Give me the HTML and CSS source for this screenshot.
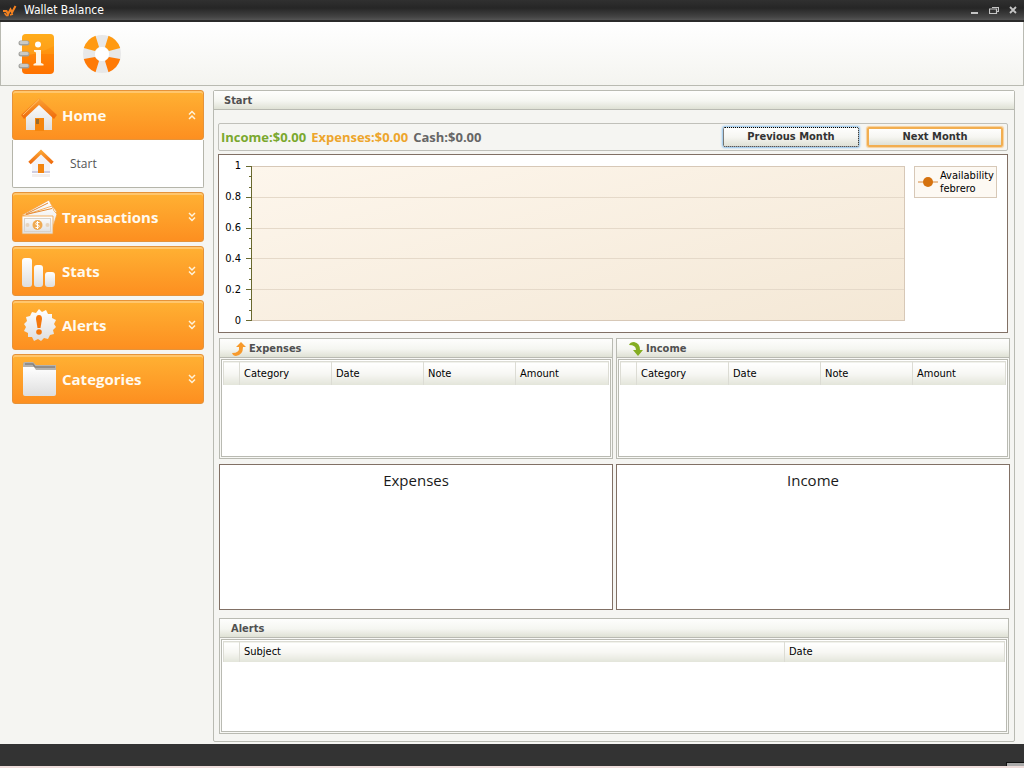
FILE: index.html
```html
<!DOCTYPE html>
<html lang="en">
<head>
<meta charset="utf-8">
<title>Wallet Balance</title>
<link rel="stylesheet" href="styles.css">
</head>
<body>
<svg class="defs" aria-hidden="true">
  <defs>
    <linearGradient id="amber" x1="0" y1="0" x2="0" y2="1"><stop offset="0" stop-color="#ffa914"/><stop offset=".5" stop-color="#ff920f"/><stop offset=".51" stop-color="#ff8508"/><stop offset="1" stop-color="#ff7200"/></linearGradient>
    <linearGradient id="pale" x1="0" y1="0" x2="0" y2="1"><stop offset="0" stop-color="#ffffff"/><stop offset="1" stop-color="#dedede"/></linearGradient>
    <linearGradient id="roof" x1="0" y1="0" x2="0" y2="1"><stop offset="0" stop-color="#fba233"/><stop offset="1" stop-color="#ef6a0c"/></linearGradient>
    <symbol id="down" viewBox="0 0 8 10"><path d="M1 1l3 3 3-3M1 5.500l3 3 3-3" fill="none" stroke="#fff3da" stroke-width="1.500"/></symbol>
  </defs>
</svg>
<header class="titlebar">
  <svg width="16" height="14" viewBox="0 0 16 14"><path d="M2 8h3.500l1.500 3L9.500 6.500l1.500 3L14.500 3" fill="none" stroke="#f58220" stroke-width="2"/><path d="M3.500 10l2 2.500h2M9 12l3-1" fill="none" stroke="#f58220" stroke-width="1.500"/></svg>
  <h1 class="app-name">Wallet Balance</h1>
  <button class="win" aria-label="Minimize"><svg width="10" height="10"><path d="M1 8h7" stroke="#c4c4c4" stroke-width="2"/></svg></button>
  <button class="win" aria-label="Restore"><svg width="10" height="10"><path d="M3 2.500h6.500v4H8M.5 4h7v4.500h-7z" fill="none" stroke="#c4c4c4" stroke-width="1.200"/></svg></button>
  <button class="win" aria-label="Close"><svg width="10" height="10"><path d="M2 2l6 6M8 2L2 8" stroke="#c4c4c4" stroke-width="1.800"/></svg></button>
</header>
<div class="toolbar">
  <button class="tool" aria-label="Information"><svg width="40" height="42" viewBox="0 0 40 42"><rect x="5" y="1" width="32" height="40" rx="4" fill="url(#amber)"/><path d="M5 23Q20 22 37 13V5q0-4-4-4H9Q5 1 5 5z" fill="#ffb52e" opacity=".3"/><g stroke="#a0a09c" stroke-width="5" stroke-linecap="round"><path d="M4 10h6M4 21h6M4 33h6"/></g><g stroke="#cacac6" stroke-width="3" stroke-linecap="round"><path d="M4 9.500h6M4 20.500h6M4 32.500h6"/></g><circle cx="21" cy="11.500" r="3" fill="#fff"/><path d="M17 17h7v13l2.500 1v1.500h-10V31l2.500-1V19.500l-2-1z" fill="#fff5e5"/></svg></button>
  <button class="tool" aria-label="Help"><svg width="42" height="42" viewBox="0 0 42 42"><circle cx="21" cy="21" r="13" fill="none" stroke="#e8e8e8" stroke-width="12"/><circle cx="21" cy="21" r="7" fill="#fff"/><g fill="#ff9a12"><path d="M14.500 2.800A19.500 19.500 0 0 0 2.800 15l11.200 3q1.500-2.500 4-4z"/><path d="M27.500 2.800A19.500 19.500 0 0 1 39.200 15l-11.200 3q-1.500-2.500-4-4z"/></g><g fill="#ff7a06"><path d="M14.500 39.200A19.500 19.500 0 0 1 2.800 26l11.200-2q1.500 2.500 4 4z"/><path d="M27.500 39.200A19.500 19.500 0 0 0 39.200 26l-11.200-2q-1.500 2.500-4 4z"/></g></svg></button>
</div>
<div class="workspace">
  <nav class="sidebar">
    <div class="section">
      <button class="nav-head"><svg width="36" height="36" viewBox="0 0 36 36"><path d="M5 16L18 4l13 12v17H5z" fill="url(#pale)"/><path d="M18 1L36 18l-3 4L18 8 3 22l-3-4z" fill="url(#roof)"/><path d="M18 2.500L2 18" stroke="#ffc16b" stroke-width="1" fill="none"/><rect x="14" y="21" width="9" height="13" fill="#f5850c"/><rect x="15" y="22" width="3" height="5" fill="#9a6a2a"/></svg><span class="nav-label">Home</span><svg class="flip" width="8" height="10"><use href="#down"/></svg></button>
      <a class="nav-item" href="#start"><svg width="26" height="30" viewBox="0 0 26 30"><path d="M4 13l9-8 9 8v10H4z" fill="#f4f3f6"/><path d="M4 22h18v2H4z" fill="#cfcde0"/><path d="M4 25h18v3H4z" fill="#f3efed"/><path d="M1.500 14L13 3l11.500 11" stroke="url(#roof)" stroke-width="3.500" fill="none"/><rect x="10" y="15" width="6" height="9" fill="#f3850f"/></svg>Start</a>
    </div>
    <button class="nav-head"><svg width="36" height="36" viewBox="0 0 36 36"><g fill="url(#pale)" stroke="#f6a13c" stroke-width=".8"><path d="M1 16L28 1q2 5 5 8l3 4L9 33z"/><path d="M1 17L31 7q1 5 5 8l-4 13-26 5z"/><path d="M1 17h31v18H1z"/></g><path d="M5 15L27 4M5 15.500l26-6" stroke="#e68a33" stroke-width="1"/><rect x="3.500" y="19.500" width="26" height="13" fill="none" stroke="#d9d2c9"/><circle cx="16.500" cy="26" r="5" fill="#efaa52"/><path d="M18.500 23.500h-3q-1.500 1.200 0 2.500h2q1.500 1.300 0 2.500h-3M16.500 22v8" fill="none" stroke="#fff"/><circle cx="6.500" cy="26" r="2" fill="#e7d4bd"/><circle cx="26.500" cy="26" r="2" fill="#e7d4bd"/></svg><span class="nav-label">Transactions</span><svg width="8" height="10"><use href="#down"/></svg></button>
    <button class="nav-head"><svg width="36" height="36" viewBox="0 0 36 36"><g fill="url(#pale)"><rect x="1" y="5" width="10" height="29" rx="3"/><rect x="13" y="12" width="9" height="22" rx="3"/><rect x="24" y="19" width="10" height="15" rx="3"/></g></svg><span class="nav-label">Stats</span><svg width="8" height="10"><use href="#down"/></svg></button>
    <button class="nav-head"><svg width="36" height="36" viewBox="0 0 36 36"><path d="M18 2l3 3 4-2 2 4h4l0 4 4 2-2 4 2 3-3 3 1 4-4 1-2 4-4-1-3 3-3-2-4 2-2-4-4 0 0-4-4-2 2-4-2-3 3-3-1-4 4-1 2-4 4 1z" fill="url(#pale)"/><path d="M15 12q0-4 3-4t3 4l-1.500 9h-3z" fill="#f5780c"/><circle cx="18" cy="25" r="2.800" fill="#f5780c"/></svg><span class="nav-label">Alerts</span><svg width="8" height="10"><use href="#down"/></svg></button>
    <button class="nav-head"><svg width="36" height="36" viewBox="0 0 36 36"><path d="M2 3q0-2 2-2h8l3 3h20v10H2z" fill="#b5b2ad"/><path d="M4 3h8l2 3h20" fill="none" stroke="#85827f" stroke-width="1.500"/><path d="M2 6h11l2 3h20v24q0 2-2 2H4q-2 0-2-2z" fill="url(#pale)"/></svg><span class="nav-label">Categories</span><svg width="8" height="10"><use href="#down"/></svg></button>
  </nav>
  <main class="page" id="start">
    <h2 class="bar">Start</h2>
    <div class="content">
      <div class="summary">
        <span class="income">Income:$0.00</span><span class="expense">Expenses:$0.00</span><span class="cash">Cash:$0.00</span>
        <button class="month focused">Previous Month</button>
        <button class="month next">Next Month</button>
      </div>
      <div class="chart">
        <div class="scale"><span>1</span><span>0.8</span><span>0.6</span><span>0.4</span><span>0.2</span><span>0</span></div>
        <svg class="ticks" viewBox="0 0 6 155" preserveAspectRatio="none"><path d="M5.500 0v155M0 .5h6M0 31.500h6M0 62.500h6M0 92.500h6M0 123.500h6M0 154.500h6M3 10.500h3M3 21.500h3M3 41.500h3M3 52.500h3M3 72.500h3M3 82.500h3M3 102.500h3M3 113.500h3M3 133.500h3M3 144.500h3" fill="none" stroke="#69692f"/></svg>
        <div class="plot"><i></i><i></i><i></i><i></i><i></i></div>
        <div class="legend"><svg width="20" height="12"><path d="M0 6h20" stroke="#d9883b"/><circle cx="10" cy="6" r="5" fill="#d5720f"/></svg><span>Availability<br>febrero</span></div>
      </div>
      <div class="pair">
        <section class="group">
          <h3 class="bar"><svg width="16" height="14" viewBox="0 0 16 14"><path d="M1 11q8 0 7-6H5l5-5 5 5h-3q0 8-7 9-3 0-4-3z" fill="#f79a2c"/></svg>Expenses</h3>
          <div class="grid"><table><colgroup><col class="mark"><col class="field"><col class="field"><col class="field"><col></colgroup><thead><tr><th></th><th>Category</th><th>Date</th><th>Note</th><th>Amount</th></tr></thead></table></div>
        </section>
        <section class="group">
          <h3 class="bar"><svg width="16" height="14" viewBox="0 0 16 14"><path d="M1 3q1-3 5-3 6 1 6 8h3l-5 6-5-6h3q0-5-7-5z" fill="#84ad22"/></svg>Income</h3>
          <div class="grid"><table><colgroup><col class="mark"><col class="field"><col class="field"><col class="field"><col></colgroup><thead><tr><th></th><th>Category</th><th>Date</th><th>Note</th><th>Amount</th></tr></thead></table></div>
        </section>
      </div>
      <div class="pair pies">
        <section class="pie">Expenses</section>
        <section class="pie">Income</section>
      </div>
      <section class="group alerts">
        <h3 class="bar">Alerts</h3>
        <div class="grid"><table><colgroup><col class="mark"><col><col class="when"></colgroup><thead><tr><th></th><th>Subject</th><th>Date</th></tr></thead></table></div>
      </section>
    </div>
  </main>
</div>
<footer class="statusbar"><span class="grip"></span></footer>
</body>
</html>
```
FILE: styles.css
```css
* { box-sizing: border-box; }
body {
  margin: 0;
  min-height: 100vh;
  display: flex;
  flex-direction: column;
  background: #f5f5f2;
  color: #000;
  font: 11px/14px "DejaVu Sans Condensed", "DejaVu Sans", sans-serif;
}
h1, h2, h3 { margin: 0; }
button { border: 0; padding: 0; background: none; font: inherit; }
svg { flex: none; }
.defs { position: absolute; width: 0; height: 0; }

.titlebar {
  display: flex;
  align-items: center;
  gap: 9px;
  height: 22px;
  padding: 0 6px 0 1px;
  background: linear-gradient(#303030, #262626 40%, #444 85%, #555);
  border-bottom: 2px solid #2a2a2a;
}
.app-name {
  flex: 1;
  margin-left: -2px;
  color: #fff;
  font: 12px/16px "DejaVu Sans Condensed", "DejaVu Sans", sans-serif;
}
.win { display: flex; }

.toolbar {
  display: flex;
  align-items: center;
  gap: 24px;
  height: 64px;
  padding-left: 16px;
  background: linear-gradient(#fff, #f4f4f0);
  border: 1px solid #b9bab2;
  border-top: 0;
}
.tool { display: flex; }

.workspace {
  flex: 1;
  display: flex;
  gap: 9px;
  padding: 4px 9px 2px 12px;
}
.sidebar {
  display: flex;
  flex-direction: column;
  gap: 4px;
  width: 192px;
}
.nav-head {
  display: flex;
  align-items: center;
  gap: 5px;
  width: 100%;
  height: 50px;
  padding: 0 7px 0 8px;
  border: 1px solid #e5933a;
  border-radius: 3px;
  background: linear-gradient(#ffb133, #fd8f20);
  box-shadow: inset 0 2px 0 #ffc66d;
}
.nav-label {
  flex: 1;
  color: #fffaf0;
  text-align: left;
  font: bold 15px/20px "Open Sans", sans-serif;
}
.flip { transform: scaleY(-1); }
.nav-item {
  display: flex;
  align-items: center;
  gap: 16px;
  height: 48px;
  padding-left: 15px;
  border: 1px solid #b5b5aa;
  border-top: 0;
  border-radius: 0 0 2px 2px;
  background: #fff;
  color: #555;
  font: 12px/14px "Open Sans", sans-serif;
  text-decoration: none;
}

.page {
  flex: 1;
  min-width: 0;
  display: flex;
  flex-direction: column;
  border: 1px solid #b9bab2;
  border-radius: 2px;
}
.bar {
  display: flex;
  align-items: center;
  gap: 2px;
  height: 19px;
  padding: 1px 0 0 11px;
  border-bottom: 1px solid #b9bab2;
  background: linear-gradient(#fefefd, #f5f6f1 55%, #dfe1d5);
  color: #505050;
  font: bold 11px/14px "DejaVu Sans Condensed", "DejaVu Sans", sans-serif;
}
.page > .bar { padding-left: 10px; }
.content {
  flex: 1;
  display: flex;
  flex-direction: column;
  padding: 13px 4px 7px;
}
.summary {
  display: flex;
  align-items: center;
  gap: 5px;
  height: 28px;
  margin-right: 2px;
  padding: 0 3px 0 2px;
  border: 1px solid #c0c0ba;
  border-radius: 2px;
  font: bold 13px/18px "Open Sans", sans-serif;
}
.income { color: #7aa82e; }
.expense { color: #eda52c; }
.cash { flex: 1; color: #666; }
.month {
  width: 136px;
  height: 20px;
  margin: 0 1px 0 2px;
  border-radius: 2px;
  background: linear-gradient(#fefefd, #f6f6f2 50%, #dfe1d6);
  color: #333;
  font: bold 11px/14px "DejaVu Sans Condensed", "DejaVu Sans", sans-serif;
}
.focused { border: 1px dotted #000; box-shadow: 0 0 2px 1px #8fc3ee; }
.next { border: 2px solid #f2ae50; box-shadow: 0 0 1px 1px #f8d09a; }

.chart {
  display: flex;
  height: 179px;
  margin: 3px 2px 0 0;
  padding: 11px 10px 11px 0;
  border: 1px solid #817065;
  background: #fff;
}
.scale {
  display: flex;
  flex-direction: column;
  justify-content: space-between;
  align-items: flex-end;
  width: 22px;
  margin: -7px 5px -7px 0;
}
.ticks { width: 6px; height: 155px; }
.plot {
  flex: 1;
  display: flex;
  flex-direction: column;
  height: 155px;
  border: 1px solid #d7c8b7;
  border-left: 0;
  background: linear-gradient(165deg, #fdf6ec, #f4e8d6);
}
.plot i { flex: 1; border-bottom: 1px solid #e5d9c9; }
.plot i:last-child { border: 0; }
.legend {
  display: flex;
  align-items: center;
  gap: 2px;
  height: 32px;
  width: 83px;
  margin-left: 9px;
  padding-left: 3px;
  border: 1px solid #d7c8b7;
  background: #fdf9f3;
  line-height: 13px;
}

.pair {
  display: grid;
  grid-template-columns: 1fr 1fr;
  gap: 3px;
  margin: 5px 0 0 1px;
}
.group {
  display: flex;
  flex-direction: column;
  min-height: 121px;
  border: 1px solid #b9bab2;
  background: #f8f8f5;
}
.grid {
  flex: 1;
  margin: 1px;
  padding: 1px;
  border: 1px solid #b9bab2;
  background: #fff;
}
table { width: 100%; border-collapse: collapse; table-layout: fixed; }
.mark { width: 16px; }
.field { width: 92px; }
.when { width: 220px; }
th {
  height: 23px;
  padding: 1px 0 0 4px;
  border: 1px solid #dcdcd4;
  border-bottom: 0;
  background: linear-gradient(#fff, #f7f7f3 50%, #e2e4d9);
  text-align: left;
  font-weight: normal;
}
.pie {
  height: 146px;
  padding-top: 4px;
  border: 1px solid #817065;
  background: #fff;
  text-align: center;
  color: #1a1a1a;
  font: 15px/22px "Open Sans", sans-serif;
}
.alerts { flex: 1; min-height: 116px; margin: 8px 1px 0; }
.alerts th { height: 20px; padding-top: 0; }

.statusbar {
  display: flex;
  justify-content: flex-end;
  align-items: flex-end;
  height: 24px;
  background: #333;
  border-bottom: 2px solid #eedddb;
}
.grip { width: 18px; height: 4px; background: #aaa; border: 1px solid #111; border-width: 1px 0 0 1px; }
```
